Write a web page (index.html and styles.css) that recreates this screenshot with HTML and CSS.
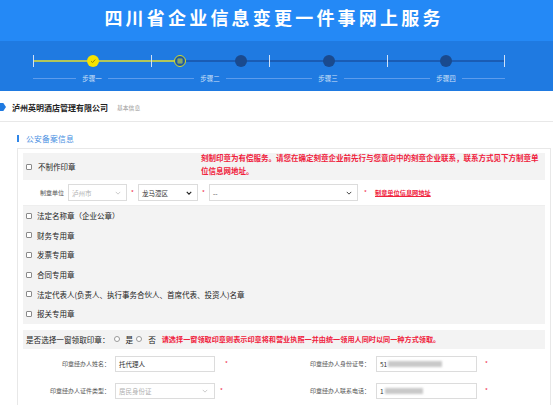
FILE: index.html
```html
<!DOCTYPE html>
<html lang="zh-CN">
<head>
<meta charset="UTF-8">
<title>四川省企业信息变更一件事网上服务</title>
<link rel="stylesheet" href="styles.css">
</head>
<body>

<header class="banner">
  <h1>四川省企业信息变更一件事网上服务</h1>
</header>

<div class="steps">
  <div class="track">
    <div class="seg done">
      <span class="dot dot-ok">
        <svg viewBox="0 0 12 12" width="12" height="12"><polyline points="4,6.2 5.6,7.6 8.2,4.6" fill="none" stroke="#9a8a00" stroke-width="1"/></svg>
      </span>
    </div>
    <div class="seg half">
      <span class="dot dot-cur">
        <svg viewBox="0 0 8 8" width="8" height="8"><rect x="2" y="2" width="4" height="4" fill="none" stroke="#d8e23a" stroke-width="0.7"/><line x1="4" y1="2" x2="4" y2="6" stroke="#d8e23a" stroke-width="0.7"/><line x1="2" y1="4" x2="6" y2="4" stroke="#d8e23a" stroke-width="0.7"/></svg>
      </span>
      <span class="dot"></span>
    </div>
    <div class="seg"><span class="dot"></span></div>
    <div class="seg last"><span class="dot"></span></div>
  </div>
  <div class="labels">
    <div class="lab"><span>步骤一</span></div>
    <div class="lab"><span>步骤二</span></div>
    <div class="lab"><span>步骤三</span></div>
    <div class="lab"><span>步骤四</span></div>
  </div>
</div>

<div class="company">
  <span class="marker"></span>
  <span class="company-name">泸州英明酒店管理有限公司</span>
  <span class="company-sub">基本信息</span>
</div>

<div class="sec-title"><span>公安备案信息</span></div>

<div class="panel">
  <div class="row-top">
    <span class="chk"></span>
    <span class="chk-label">不制作印章</span>
    <div class="note">刻制印章为有偿服务。请您在确定刻章企业前先行与您意向中的刻章企业联系，联系方式见下方制章单<br>位信息网地址。</div>
  </div>

  <div class="row-unit">
    <span class="unit-label">制章单位</span>
    <div class="sel sel-city placeholder">泸州市
      <svg viewBox="0 0 8 5" width="6" height="4"><polyline points="1,1 4,4 7,1" fill="none" stroke="#aaa" stroke-width="0.8"/></svg>
    </div>
    <span class="star">*</span>
    <div class="sel sel-area">龙马潭区
      <svg viewBox="0 0 8 5" width="6" height="4"><polyline points="1,1 4,4 7,1" fill="none" stroke="#222" stroke-width="1.5"/></svg>
    </div>
    <span class="star">*</span>
    <div class="sel sel-shop">--
      <svg viewBox="0 0 8 5" width="6" height="4"><polyline points="1,1 4,4 7,1" fill="none" stroke="#333" stroke-width="1.2"/></svg>
    </div>
    <span class="star star-wide">*</span>
    <a class="unit-link">制章单位信息网地址</a>
  </div>

  <div class="seal-list">
    <div class="item"><span class="chk"></span><span>法定名称章（企业公章）</span></div>
    <div class="item"><span class="chk"></span><span>财务专用章</span></div>
    <div class="item"><span class="chk"></span><span>发票专用章</span></div>
    <div class="item"><span class="chk"></span><span>合同专用章</span></div>
    <div class="item"><span class="chk"></span><span>法定代表人(负责人、执行事务合伙人、首席代表、投资人)名章</span></div>
    <div class="item"><span class="chk"></span><span>报关专用章</span></div>
  </div>

  <div class="row-radio">
    <span class="radio-q">是否选择一窗领取印章：</span>
    <span class="radio"></span><span class="radio-txt">是</span>
    <span class="radio radio-2"></span><span class="radio-txt">否</span>
    <span class="radio-note">请选择一窗领取印章则表示印章将和营业执照一并由统一领用人同时以同一种方式领取。</span>
  </div>

  <div class="form">
    <label class="f-label">印章经办人姓名：</label>
    <div class="inp">托代理人</div>
    <span class="f-star">*</span>
    <label class="f-label f-label-r">印章经办人身份证号：</label>
    <div class="inp">51<span class="blur blur-id"></span></div>
    <span class="f-star f-star-r">*</span>

    <label class="f-label">印章经办人证件类型：</label>
    <div class="inp inp-sel placeholder">居民身份证
      <svg viewBox="0 0 8 5" width="6" height="4"><polyline points="1,1 4,4 7,1" fill="none" stroke="#aaa" stroke-width="0.8"/></svg>
    </div>
    <span class="f-star f-star-sel">*</span>
    <label class="f-label f-label-r">印章经办人联系电话：</label>
    <div class="inp">1<span class="blur blur-tel"></span></div>
    <span class="f-star f-star-r">*</span>
  </div>
</div>

</body>
</html>
```

FILE: styles.css
```css
body {
  margin: 0;
  width: 553px;
  height: 405px;
  overflow: hidden;
  background: #fff;
  color: #333;
  font-family: "Noto Sans CJK SC", "Noto Sans", sans-serif;
}

/* 顶部标题 */
.banner {
  height: 41px;
  background: #2489f6;
  display: flex;
  justify-content: center;
  align-items: center;
  box-sizing: border-box;
  padding-bottom: 7px;
}

.banner h1 {
  margin: 0 0 0 -5px;
  color: #fff;
  font-size: 18px;
  font-weight: 700;
  letter-spacing: 3.2px;
  line-height: 1;
}

/* 步骤条 */
.steps {
  height: 50px;
  background: #1f7ae1;
  box-sizing: border-box;
  padding: 14px 0 0 33px;
}

.track {
  display: flex;
  width: 472px;
  height: 12px;
}

.seg {
  width: 118px;
  display: flex;
  align-items: center;
  justify-content: center;
  border-left: 1.5px solid #cfe1f8;
  box-sizing: border-box;
  background: linear-gradient(#1a5cb4, #1a5cb4) center / 100% 2px no-repeat;
}

.seg.last {
  border-right: 1.5px solid #cfe1f8;
}

.seg.done {
  background: linear-gradient(#b2c65a, #b2c65a) center / 100% 2px no-repeat;
}

.seg.half {
  justify-content: space-between;
  padding: 0 22px;
  background: linear-gradient(to right, #b2c65a 0 29px, #1a5cb4 29px) center / 100% 2px no-repeat;
}

.dot {
  width: 12px;
  height: 12px;
  border-radius: 50%;
  background: #1a4a8e;
  display: flex;
  align-items: center;
  justify-content: center;
}

.dot-ok {
  background: #f6e300;
}

.dot-cur {
  box-sizing: border-box;
  border: 1.5px solid #d3dc2c;
  background: #1b57a8;
}

.labels {
  display: grid;
  grid-template-columns: repeat(4, 118px);
  margin-top: 7px;
}

.lab {
  display: flex;
  align-items: center;
  height: 8px;
}

.lab::before,
.lab::after {
  content: "";
  flex: 1;
  height: 1px;
  background: #5d9cec;
}

.lab span {
  margin: 0 6px;
  font-size: 6.5px;
  line-height: 8px;
  color: #cfe0f8;
}

/* 企业名称 */
.company {
  height: 31px;
  display: flex;
  align-items: center;
  box-sizing: border-box;
  padding-top: 2px;
  border-bottom: 1px solid #e8e8e8;
}

.marker {
  width: 6px;
  height: 8px;
  background: #1f7ae1;
  clip-path: polygon(0 0, 55% 0, 100% 50%, 55% 100%, 0 100%);
}

.company-name {
  margin-left: 6px;
  font-size: 8px;
  font-weight: 700;
  color: #222;
}

.company-sub {
  margin-left: 9px;
  font-size: 5.8px;
  color: #999;
}

.sec-title {
  height: 26px;
  display: flex;
  align-items: center;
  box-sizing: border-box;
  padding: 6px 0 0 17px;
}

.sec-title span {
  border-left: 2px solid #2f86e8;
  padding-left: 7px;
  font-size: 7.8px;
  line-height: 7px;
  letter-spacing: 0.2px;
  color: #4a90e2;
}

/* 面板 */
.panel {
  margin-left: 17px;
  width: 534px;
  box-sizing: border-box;
  border: 1px solid #e8e8e8;
  border-bottom: none;
  padding: 4px 5px 0;
  height: 260px;
}

.chk {
  width: 6px;
  height: 6px;
  box-sizing: border-box;
  border: 1px solid #8a8a8a;
  border-radius: 1px;
  background: #fff;
  flex: none;
}

.row-top {
  height: 27px;
  background: #f3f3f3;
  display: flex;
  align-items: center;
  padding-left: 3px;
}

.chk-label {
  margin-left: 6px;
  font-size: 7.5px;
  color: #222;
}

.note {
  margin-left: auto;
  margin-bottom: 6px;
  width: 344px;
  font-size: 7.5px;
  line-height: 13px;
  font-weight: 700;
  color: #f0213c;
  white-space: nowrap;
}

.row-unit {
  height: 26px;
  display: flex;
  align-items: center;
  box-sizing: border-box;
  padding-left: 17px;
  border-bottom: 1px solid #eee;
}

.unit-label {
  width: 24px;
  margin-right: 4px;
  font-size: 6px;
  color: #555;
}

.sel {
  height: 17px;
  box-sizing: border-box;
  border: 1px solid #dcdcdc;
  background: #fff;
  display: flex;
  align-items: center;
  justify-content: space-between;
  padding: 0 5px 0 3px;
  font-size: 6.5px;
  color: #333;
}

.placeholder {
  color: #b0b0b0;
}

.sel-city { width: 59px; }
.sel-area { width: 60px; }
.sel-shop { width: 149px; }

.star {
  margin: 0 4px;
  width: 3px;
  font-size: 6px;
  color: #f0213c;
}

.star-wide {
  margin: 0 8px 0 6px;
}

.unit-link {
  font-size: 6.2px;
  font-weight: 700;
  color: #f0213c;
  text-decoration: underline;
}

.seal-list {
  background: #f3f3f3;
  padding-left: 3px;
}

.item {
  height: 19.6px;
  display: flex;
  align-items: center;
  font-size: 7.5px;
  color: #222;
}

.item .chk {
  margin-right: 5px;
}

.row-radio {
  margin-top: 6px;
  height: 19px;
  background: #f3f3f3;
  display: flex;
  align-items: center;
  padding-left: 3px;
  font-size: 7.6px;
  color: #222;
}

.radio {
  width: 6px;
  height: 6px;
  box-sizing: border-box;
  border: 1px solid #999;
  border-radius: 50%;
  background: #fff;
  margin-left: 4px;
}

.radio-2 {
  margin-left: 3px;
}

.radio-txt {
  margin-left: 6px;
}

.radio-note {
  margin-left: 6px;
  font-size: 7.15px;
  font-weight: 700;
  color: #f0213c;
  white-space: nowrap;
}

/* 经办人表单 */
.form {
  display: grid;
  grid-template-columns: 92px 100px 61px 100px 101px auto;
  grid-auto-rows: 16px;
  row-gap: 11px;
  align-items: center;
  padding-top: 7px;
}

.f-label {
  text-align: right;
  padding-right: 5px;
  font-size: 6px;
  color: #555;
}

.f-label-r {
  padding-right: 6px;
}

.inp {
  height: 16px;
  box-sizing: border-box;
  border: 1px solid #dcdcdc;
  background: #fff;
  display: flex;
  align-items: center;
  padding-left: 3px;
  font-size: 6.5px;
  color: #333;
}

.inp-sel {
  justify-content: space-between;
  padding-right: 6px;
  color: #b0b0b0;
}

.f-star {
  padding-left: 10px;
  font-size: 6px;
  color: #f0213c;
}

.f-star-sel {
  padding-left: 5px;
}

.f-star-r {
  padding-left: 8px;
}

.blur {
  display: inline-block;
  height: 6px;
  margin-left: 1px;
  background: #c9c9c9;
  filter: blur(1.2px);
}

.blur-id { width: 54px; }
.blur-tel { width: 38px; }
```
